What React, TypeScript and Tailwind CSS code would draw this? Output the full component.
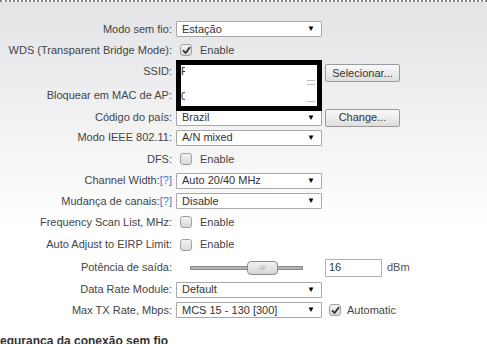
import React from "react"

const font = "font-['Liberation_Sans',Arial,Helvetica,sans-serif]"

function Sel({value}: {value: string}) {
    return (
        <div className="flex h-[16px] w-[146px] shrink-0 items-center justify-between rounded-[1px] border border-[#a8a8a8] bg-white pl-[5px] pr-[6px] text-[11px] leading-none text-[#333]">
            <span>{value}</span>
            <span className="text-[8px] leading-none text-black">▼</span>
        </div>
    )
}

function Check({checked}: {checked?: boolean}) {
    return (
        <div className="flex h-[12px] w-[12px] shrink-0 items-center justify-center rounded-[3px] border border-[#a0a0a0] bg-gradient-to-b from-[#f4f4f4] to-[#d8d8d8]">
            {checked && (
                <svg width="9" height="9" viewBox="0 0 9 9">
                    <path d="M1.5 4.8 L3.6 7 L7.6 1.6" fill="none" stroke="#333" strokeWidth="1.8"
                          strokeLinecap="round" strokeLinejoin="round"/>
                </svg>
            )}
        </div>
    )
}

function Btn({children}: {children: React.ReactNode}) {
    return (
        <div className="flex h-[18px] w-[75px] shrink-0 items-center justify-center rounded-[2px] border border-[#9a9a9a] bg-gradient-to-b from-[#fafafa] to-[#dedede] text-[11px] leading-none text-[#333]">
            {children}
        </div>
    )
}

function Row({label, help, h, className = "", children}: {
    label: string,
    help?: boolean,
    h: string,
    className?: string,
    children?: React.ReactNode
}) {
    return (
        <div className={`flex items-center ${h} ${className}`}>
            <div className="w-[172px] shrink-0 whitespace-nowrap text-right text-[11px] text-[#444]">
                {label}{help && <span className="text-[#3b7dc4]">[?]</span>}
            </div>
            <div className="ml-[4px] flex items-center">
                {children}
            </div>
        </div>
    )
}

function Enable({checked}: {checked?: boolean}) {
    return (
        <div className="ml-[4px] flex items-center gap-[8px] text-[11px] text-[#444]">
            <Check checked={checked}/>
            <span>Enable</span>
        </div>
    )
}

export default function App() {
    return (
        <div
            className={`${font} h-[344px] w-[487px] overflow-hidden border-t-2 border-dotted border-[#8a8a8a] bg-[linear-gradient(to_bottom,#e3e4e6_0px,#f3f3f4_130px,#ffffff_230px)] pt-[16px]`}>
            <Row label="Modo sem fio:" h="h-[22px]">
                <Sel value="Estação"/>
            </Row>
            <Row label="WDS (Transparent Bridge Mode):" h="h-[20px]">
                <Enable checked/>
            </Row>

            <div className="flex h-[51px]">
                <div className="flex w-[172px] shrink-0 flex-col text-right text-[11px] text-[#444]">
                    <div className="flex h-[22px] items-center justify-end">SSID:</div>
                    <div className="flex h-[27px] items-center justify-end">Bloquear em MAC de AP:</div>
                </div>
                <div
                    className="relative z-10 ml-[4px] h-[51px] w-[146px] shrink-0 border-[5px] border-black bg-white text-[11px] leading-none text-[#333]">
                    <div className="flex h-[12px] items-center">
                        <span className="w-[4px] overflow-hidden">P</span>
                    </div>
                    <div className="mt-[13px] flex h-[12px] items-center">
                        <span className="w-[4px] overflow-hidden">0</span>
                    </div>
                    <div className="absolute right-[2px] top-[15px] h-px w-[8px] bg-[#bbb]"/>
                    <div className="absolute right-[2px] top-[19px] h-px w-[8px] bg-[#bbb]"/>
                    <div className="absolute right-[2px] top-[36px] h-px w-[8px] bg-[#bbb]"/>
                </div>
                <div className="ml-[3px] mt-[4px]">
                    <Btn>Selecionar...</Btn>
                </div>
            </div>

            <Row label="Código do país:" h="h-[19px]" className="-mt-[3px]">
                <Sel value="Brazil"/>
                <div className="ml-[3px]">
                    <Btn>Change...</Btn>
                </div>
            </Row>
            <Row label="Modo IEEE 802.11:" h="h-[21px]">
                <Sel value="A/N mixed"/>
            </Row>
            <Row label="DFS:" h="h-[22px]">
                <Enable/>
            </Row>
            <Row label="Channel Width:" help h="h-[21px]">
                <Sel value="Auto 20/40 MHz"/>
            </Row>
            <Row label="Mudança de canais:" help h="h-[20px]">
                <Sel value="Disable"/>
            </Row>
            <Row label="Frequency Scan List, MHz:" h="h-[22px]">
                <Enable/>
            </Row>
            <Row label="Auto Adjust to EIRP Limit:" h="h-[23px]">
                <Enable/>
            </Row>
            <Row label="Potência de saída:" h="h-[23px]">
                <div className="relative flex h-[16px] w-[146px] items-center pl-[14px]">
                    <div className="h-[4px] w-[113px] border border-[#888] bg-[#b4b4b4]"/>
                    <div
                        className="absolute left-[71px] top-[1px] flex h-[14px] w-[31px] items-center justify-center rounded-[4px] border border-[#8c8c8c] bg-gradient-to-b from-[#f2f2f2] to-[#d6d6d6] text-[7px] italic leading-none text-[#999]">
                        ///
                    </div>
                </div>
                <div
                    className="ml-[3px] flex h-[18px] w-[57px] items-center border border-[#b0b0b0] bg-white pl-[3px] text-[11px] text-[#333]">16
                </div>
                <span className="ml-[5px] text-[11px] text-[#555]">dBm</span>
            </Row>
            <Row label="Data Rate Module:" h="h-[21px]">
                <Sel value="Default"/>
            </Row>
            <Row label="Max TX Rate, Mbps:" h="h-[20px]">
                <Sel value="MCS 15 - 130 [300]"/>
                <div className="ml-[7px] flex items-center gap-[6px] text-[11px] text-[#444]">
                    <Check checked/>
                    <span>Automatic</span>
                </div>
            </Row>

            <div className="-ml-[8px] mt-[14px] whitespace-nowrap text-[12px] font-bold leading-[14px] text-[#333]">
                Segurança da conexão sem fio
            </div>
        </div>
    )
}
